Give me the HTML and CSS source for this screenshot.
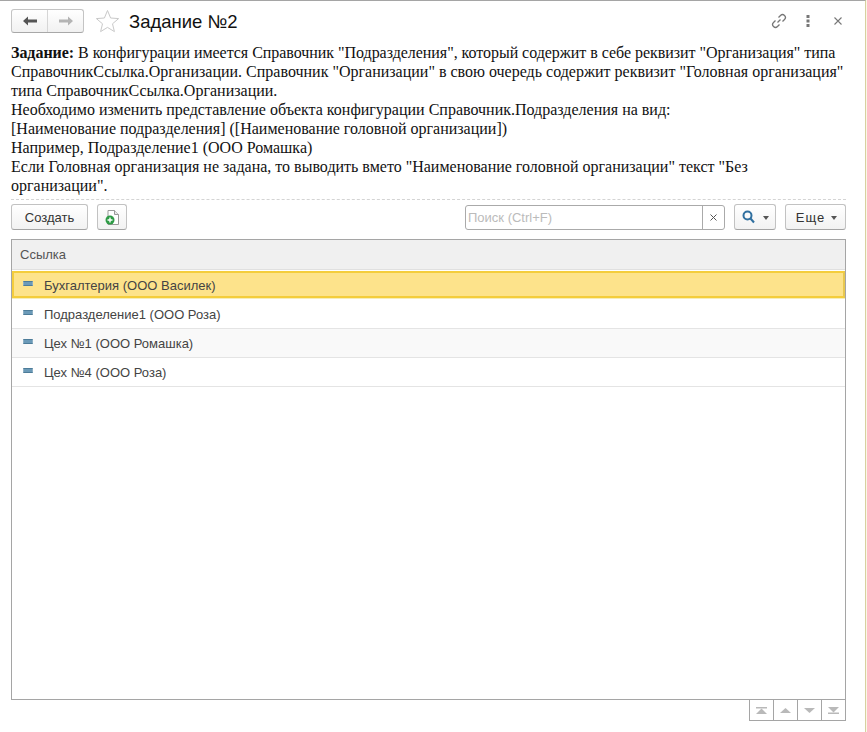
FILE: index.html
```html
<!DOCTYPE html>
<html lang="ru">
<head>
<meta charset="utf-8">
<title>Задание №2</title>
<link rel="stylesheet" href="styles.css">
</head>
<body>
<div class="window">
  <header class="titlebar">
    <div class="nav">
      <button class="nav-btn"><svg width="16" height="12" viewBox="0 0 16 12"><path d="M1 6l5-4.500v3h9v3H6v3z" fill="#555"/></svg></button>
      <button class="nav-btn"><svg width="16" height="12" viewBox="0 0 16 12"><path d="M15 6l-5-4.500v3H1v3h9v3z" fill="#b4b4b4"/></svg></button>
    </div>
    <svg class="star" width="25" height="24" viewBox="0 0 25 24"><path d="M12.500 1.500l3.100 7.500 8 .6-6.100 5.200 1.900 7.800-6.900-4.200-6.900 4.200 1.900-7.800L1.400 9.600l8-.6z" fill="#fff" stroke="#c9c9c9"/></svg>
    <h1 class="title">Задание №2</h1>
    <div class="win-actions">
      <svg width="16" height="16" viewBox="0 0 16 16" fill="none" stroke="#777" stroke-width="1.300"><path d="M6.500 9.500l3-3M7.500 4.500l2-2a2.800 2.800 0 0 1 4 4l-2 2M8.500 11.500l-2 2a2.800 2.800 0 0 1-4-4l2-2"/></svg>
      <svg width="4" height="12" viewBox="0 0 4 12" fill="#777"><rect x="0.500" y="0" width="3" height="3"/><rect x="0.500" y="4.500" width="3" height="3"/><rect x="0.500" y="9" width="3" height="3"/></svg>
      <svg class="close" width="8" height="8" viewBox="0 0 8 8" stroke="#777" stroke-width="1.100"><path d="M.5.500l7 7M7.500.500l-7 7"/></svg>
    </div>
  </header>
  <div class="task">
    <span class="tight"><b>Задание:</b> В конфигурации имеется Справочник "Подразделения", который содержит в себе реквизит "Организация" типа</span><br>
    СправочникСсылка.Организации. Справочник "Организации" в свою очередь содержит реквизит "Головная организация"<br>
    типа СправочникСсылка.Организации.<br>
    Необходимо изменить представление объекта конфигурации Справочник.Подразделения на вид:<br>
    [Наименование подразделения] ([Наименование головной организации])<br>
    Например, Подразделение1 (ООО Ромашка)<br>
    Если Головная организация не задана, то выводить вмето "Наименование головной организации" текст "Без<br>
    организации".
  </div>
  <div class="toolbar">
    <button class="btn btn-create">Создать</button>
    <button class="btn btn-icon"><svg width="14" height="15" viewBox="0 0 14 15"><path d="M3 .5h6.500l4 4v10H3z" fill="#fff" stroke="#999"/><path d="M9.500 .5v4h4" fill="#e8e8e8" stroke="#999"/><circle cx="5" cy="10" r="4.500" fill="#2e9b46"/><path d="M2.500 10h5M5 7.500v5" stroke="#fff" stroke-width="1.400"/></svg></button>
    <div class="search">
      <span class="search-input">Поиск (Ctrl+F)</span>
      <span class="search-clear"><svg width="7" height="7" viewBox="0 0 7 7" stroke="#555"><path d="M.5.500l6 6M6.500.500l-6 6"/></svg></span>
    </div>
    <button class="btn btn-find"><svg width="13" height="14" viewBox="0 0 13 14" fill="none" stroke="#2f6f9f" stroke-width="2"><circle cx="5.500" cy="5.500" r="4"/><path d="M8.500 8.500l3.500 4"/></svg><i class="caret"></i></button>
    <button class="btn btn-more"><span class="more-label">Еще</span><i class="caret"></i></button>
  </div>
  <div class="table">
    <div class="thead">Ссылка</div>
    <div class="row selected"><i class="mark"></i>Бухгалтерия (ООО Василек)</div>
    <div class="row"><i class="mark"></i>Подразделение1 (ООО Роза)</div>
    <div class="row alt"><i class="mark"></i>Цех №1 (ООО Ромашка)</div>
    <div class="row"><i class="mark"></i>Цех №4 (ООО Роза)</div>
  </div>
  <div class="pager">
    <span class="page"><svg width="11" height="7" viewBox="0 0 11 7" fill="#b9b9b9"><rect x="0" y="0" width="11" height="1.500"/><path d="M5.500 1.500L11 7H0z"/></svg></span>
    <span class="page"><svg width="11" height="7" viewBox="0 0 11 7" fill="#b9b9b9"><path d="M5.500 1L11 6H0z"/></svg></span>
    <span class="page"><svg width="11" height="7" viewBox="0 0 11 7" fill="#b9b9b9"><path d="M5.500 6L11 1H0z"/></svg></span>
    <span class="page"><svg width="11" height="7" viewBox="0 0 11 7" fill="#b9b9b9"><path d="M5.500 5.500L11 0H0z"/><rect x="0" y="5.500" width="11" height="1.500"/></svg></span>
  </div>
</div>
</body>
</html>
```
FILE: styles.css
```css
* { box-sizing: border-box; }
html, body { margin: 0; padding: 0; height: 100%; overflow: hidden; background: #fbf8e6; }
body { font-family: "Liberation Sans", Arial, sans-serif; color: #333; }
.window { width: 866px; height: 732px; background: #fff; border-top: 1px solid #a5a5a5; border-right: 1px solid #d8d0a0; display: flex; flex-direction: column; padding: 0 0 0 11px; }
.titlebar { display: flex; align-items: center; height: 42px; padding-bottom: 2px; width: 831px; flex: none; }
.nav { display: flex; width: 73px; height: 24px; border: 1px solid #c4c4c4; border-bottom-color: #a8a8a8; border-radius: 3px; background: linear-gradient(#fff, #f1f1f1); }
.nav-btn { flex: 1; border: 0; background: none; padding: 0; display: flex; align-items: center; justify-content: center; }
.nav-btn + .nav-btn { border-left: 1px solid #d6d6d6; }
.star { margin-left: 11px; }
.title { margin: 2px 0 0 9px; font-size: 18.500px; font-weight: 400; color: #111; flex: 1; }
.win-actions { display: flex; align-items: center; gap: 19px; }
.close { margin-left: 5px; }
.task { font-family: "Liberation Serif", "Times New Roman", serif; font-size: 16px; line-height: 19px; color: #111; white-space: nowrap; height: 157px; border-bottom: 1px dashed #d4d4d4; width: 835px; flex: none; }
.tight { letter-spacing: -0.040px; }
.toolbar { display: flex; align-items: flex-start; width: 835px; margin-top: 4px; height: 35px; flex: none; }
.btn { height: 26px; flex: none; border: 1px solid #c2c2c2; border-bottom-color: #a4a4a4; border-radius: 3px; background: linear-gradient(#fff, #f2f2f2); font: 13px "Liberation Sans", Arial, sans-serif; color: #333; padding: 0; display: flex; align-items: center; justify-content: center; }
.btn-create { width: 77px; }
.btn-icon { width: 30px; margin-left: 9px; }
.search { display: flex; flex: none; width: 260px; height: 25px; margin-left: 338px; margin-top: 1px; border: 1px solid #aaa; border-radius: 3px; background: #fff; }
.search-input { flex: 1; font-size: 13px; color: #bbb; padding: 4px 2px; border-right: 1px solid #aaa; }
.search-clear { width: 21px; display: flex; align-items: center; justify-content: center; }
.btn-find { width: 42px; margin-left: 9px; gap: 8px; padding-left: 1px; }
.btn-more { width: 61px; margin-left: 9px; gap: 6px; padding-left: 2px; }
.more-label { letter-spacing: 1px; }
.caret { display: inline-block; width: 0; height: 0; border-left: 3.500px solid transparent; border-right: 3.500px solid transparent; border-top: 4px solid #555; margin-top: 2px; }
.table { width: 835px; height: 461px; flex: none; border: 1px solid #a5a5a5; font-size: 13px; }
.thead { height: 30px; background: #f0f0f0; color: #555; padding: 7px 8px; border-bottom: 1px solid #e0e0e0; margin-bottom: 1px; }
.row { height: 29px; display: flex; align-items: center; padding: 0 0 0 11px; border-bottom: 1px solid #e4e4e4; color: #444; }
.row.alt { background: #f9f9f9; }
.row.selected { height: 27px; margin-bottom: 2px; background: #fde38b; border: 2px solid #f4cd3c; border-right-color: #e8c850; padding: 2px 0 0 9px; box-shadow: 0 1px 0 #f6eeb8; }
.mark { width: 10px; height: 5px; margin-right: 11px; margin-top: -3px; background: #6b9ab8; border: 1px solid #4d7c99; border-left-color: #8fb0c4; border-right-color: #8fb0c4; }
.row.selected .mark { margin-top: -5px; }
.pager { display: flex; align-self: flex-start; margin-left: 738px; height: 21px; }
.page { width: 25px; height: 21px; border: 1px solid #a5a5a5; border-top: 0; margin-left: -1px; display: flex; align-items: center; justify-content: center; }
.page:first-child { margin-left: 0; }
```
